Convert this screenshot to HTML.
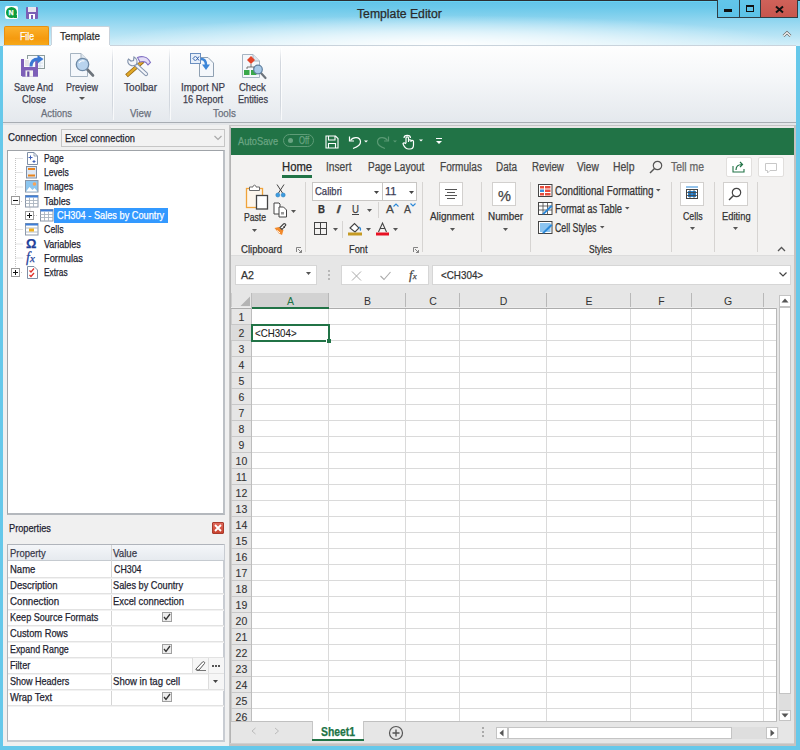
<!DOCTYPE html><html><head><meta charset="utf-8"><style>
html,body{margin:0;padding:0;width:800px;height:750px;overflow:hidden;background:#66c8ea;}
body>div,#r div{position:absolute;box-sizing:border-box;}
.t{white-space:nowrap;line-height:20px;font-family:"Liberation Sans",sans-serif;-webkit-text-stroke:0.25px currentColor;}
svg{position:absolute;overflow:visible}
</style></head><body>
<div style="left:0px;top:0px;width:800px;height:46px;background:linear-gradient(#5fc3e8 0px,#6cc9ea 8px,#9ad9f1 24px,#c4e9f7 40px,#d4eff9 46px)"></div>
<div style="left:80px;top:5px;width:700px;height:41px;background:radial-gradient(ellipse 50% 75% at 52% 100%,rgba(255,255,255,1),rgba(255,255,255,0.6) 45%,rgba(255,255,255,0) 100%)"></div>
<div style="left:0px;top:0px;width:800px;height:1px;background:#2b2e31"></div>
<div style="left:0px;top:1px;width:800px;height:1px;background:#68d3f3"></div>
<div class="t" style="left:357.00px;top:4px;font-size:12px;color:#2a2a2a;transform:scaleX(1.018);transform-origin:0 0;">Template Editor</div>
<div style="left:717px;top:0px;width:81px;height:18px;background:#2f3d44"></div>
<div style="left:718px;top:0px;width:21px;height:17px;background:linear-gradient(#62c6ea,#5cc2e7)"></div>
<div style="left:740px;top:0px;width:20px;height:17px;background:linear-gradient(#62c6ea,#5cc2e7)"></div>
<div style="left:761px;top:0px;width:36px;height:17px;background:linear-gradient(#d0625a,#c7564d)"></div>
<div style="left:724px;top:9px;width:8px;height:3px;background:#111"></div>
<div style="left:746px;top:5px;width:8px;height:7px;border:1px solid #111;border-top-width:2px"></div>
<svg style="left:775px;top:6px" width="9" height="7"><path d="M1 0.5 L8 6.5 M8 0.5 L1 6.5" stroke="#111" stroke-width="2"/></svg>
<svg style="left:782px;top:30px" width="10" height="8"><path d="M1.5 6 L5 2.5 L8.5 6" stroke="#666" stroke-width="2.6" fill="none"/><path d="M1.5 6 L5 2.5 L8.5 6" stroke="#fff" stroke-width="1.2" fill="none"/></svg>
<div style="left:5px;top:6px;width:13px;height:13px;background:#fff;border-radius:2px"></div>
<div style="left:6px;top:7px;width:11px;height:11px;background:#0d9d3f;border-radius:50%"></div>
<div class="t" style="left:8.5px;top:3px;font-size:7px;font-weight:bold;color:#fff;line-height:20px">N</div>
<div style="left:14px;top:15px;width:3px;height:3px;background:#0d9d3f"></div>
<div style="left:26px;top:7px;width:12px;height:12px;background:#7b5fb5;border-radius:1px"></div>
<div style="left:28px;top:7px;width:8px;height:5px;background:#e8e6ee"></div>
<div style="left:29px;top:14px;width:6px;height:5px;background:#fff"></div>
<div style="left:31px;top:15px;width:2px;height:4px;background:#7b5fb5"></div>
<div style="left:4px;top:26px;width:45px;height:20px;background:linear-gradient(#fbb12c,#f59a0f 60%,#f7ab1a);border:1px solid #e89010;border-bottom:none;border-radius:2px 2px 0 0"></div>
<div class="t" style="left:20.00px;top:26px;font-size:11px;color:#fff;transform:scaleX(0.789);transform-origin:0 0;">File</div>
<div style="left:51px;top:26px;width:59px;height:21px;background:#fff;border:1px solid #c9d3dc;border-bottom:none;border-radius:2px 2px 0 0"></div>
<div class="t" style="left:60.00px;top:26px;font-size:11px;color:#2d2d2d;transform:scaleX(0.894);transform-origin:0 0;">Template</div>
<div style="left:3px;top:45px;width:793px;height:78px;background:linear-gradient(#fefefe,#f4f6f8 45%,#e4e8ed);border-top:1px solid #c9d3dc"></div>
<div style="left:51px;top:45px;width:59px;height:2px;background:#fff"></div>
<div style="left:3px;top:122px;width:793px;height:1px;background:#a8adb3"></div>
<div style="left:3px;top:123px;width:793px;height:2px;background:#e4e6e9"></div>
<div style="left:112px;top:48px;width:1px;height:72px;background:linear-gradient(rgba(210,215,222,0),#d2d7de 20%,#d2d7de 80%,rgba(210,215,222,0))"></div>
<div style="left:113px;top:48px;width:1px;height:72px;background:rgba(255,255,255,0.7)"></div>
<div style="left:169px;top:48px;width:1px;height:72px;background:linear-gradient(rgba(210,215,222,0),#d2d7de 20%,#d2d7de 80%,rgba(210,215,222,0))"></div>
<div style="left:170px;top:48px;width:1px;height:72px;background:rgba(255,255,255,0.7)"></div>
<div style="left:280px;top:48px;width:1px;height:72px;background:linear-gradient(rgba(210,215,222,0),#d2d7de 20%,#d2d7de 80%,rgba(210,215,222,0))"></div>
<div style="left:281px;top:48px;width:1px;height:72px;background:rgba(255,255,255,0.7)"></div>
<div class="t" style="left:14.00px;top:77px;font-size:11px;color:#3d3d4d;transform:scaleX(0.830);transform-origin:0 0;">Save And</div>
<div class="t" style="left:22.00px;top:89px;font-size:11px;color:#3d3d4d;transform:scaleX(0.850);transform-origin:0 0;">Close</div>
<div class="t" style="left:41.00px;top:103px;font-size:11px;color:#6a707c;transform:scaleX(0.861);transform-origin:0 0;">Actions</div>
<div class="t" style="left:66.00px;top:77px;font-size:11px;color:#3d3d4d;transform:scaleX(0.815);transform-origin:0 0;">Preview</div>
<svg style="left:79px;top:97px" width="7" height="4"><path d="M0 0 H6 L3 3 Z" fill="#555"/></svg>
<div class="t" style="left:124.00px;top:77px;font-size:11px;color:#3d3d4d;transform:scaleX(0.917);transform-origin:0 0;">Toolbar</div>
<div class="t" style="left:130.00px;top:103px;font-size:11px;color:#6a707c;transform:scaleX(0.884);transform-origin:0 0;">View</div>
<div class="t" style="left:181.00px;top:77px;font-size:11px;color:#3d3d4d;transform:scaleX(0.889);transform-origin:0 0;">Import NP</div>
<div class="t" style="left:183.00px;top:89px;font-size:11px;color:#3d3d4d;transform:scaleX(0.829);transform-origin:0 0;">16 Report</div>
<div class="t" style="left:239.00px;top:77px;font-size:11px;color:#3d3d4d;transform:scaleX(0.857);transform-origin:0 0;">Check</div>
<div class="t" style="left:238.00px;top:89px;font-size:11px;color:#3d3d4d;transform:scaleX(0.833);transform-origin:0 0;">Entities</div>
<div class="t" style="left:213.00px;top:103px;font-size:11px;color:#6a707c;transform:scaleX(0.893);transform-origin:0 0;">Tools</div>
<div style="left:3px;top:125px;width:226px;height:621px;background:#f0f0f0"></div>
<div class="t" style="left:8.00px;top:127px;font-size:11px;color:#1e1e2e;transform:scaleX(0.879);transform-origin:0 0;">Connection</div>
<div style="left:61px;top:129px;width:164px;height:18px;background:#f2f2f2;border:1px solid #c6c6c6"></div>
<div class="t" style="left:65.00px;top:128px;font-size:11px;color:#1e1e2e;transform:scaleX(0.841);transform-origin:0 0;">Excel connection</div>
<svg style="left:214px;top:135px" width="8" height="6"><path d="M0.5 1 L4 4.5 L7.5 1" stroke="#aaa" stroke-width="1.2" fill="none"/></svg>
<div style="left:7px;top:150px;width:218px;height:365px;background:#fff;border:1px solid #9fa3a8;border-right:2px solid #bcc0c5;border-bottom:2px solid #b4b8bd"></div>
<div class="t" style="left:43.80px;top:148px;font-size:11px;color:#1e1e30;transform:scaleX(0.765);transform-origin:0 0;">Page</div>
<div class="t" style="left:43.80px;top:162px;font-size:11px;color:#1e1e30;transform:scaleX(0.778);transform-origin:0 0;">Levels</div>
<div class="t" style="left:43.80px;top:176px;font-size:11px;color:#1e1e30;transform:scaleX(0.811);transform-origin:0 0;">Images</div>
<div class="t" style="left:43.80px;top:191px;font-size:11px;color:#1e1e30;transform:scaleX(0.825);transform-origin:0 0;">Tables</div>
<div style="left:54px;top:208px;width:114px;height:15px;background:#3399ff"></div>
<div class="t" style="left:57.00px;top:205px;font-size:11px;color:#fff;transform:scaleX(0.838);transform-origin:0 0;">CH304 - Sales by Country</div>
<div class="t" style="left:43.80px;top:219px;font-size:11px;color:#1e1e30;transform:scaleX(0.804);transform-origin:0 0;">Cells</div>
<div class="t" style="left:43.80px;top:234px;font-size:11px;color:#1e1e30;transform:scaleX(0.816);transform-origin:0 0;">Variables</div>
<div class="t" style="left:43.80px;top:248px;font-size:11px;color:#1e1e30;transform:scaleX(0.846);transform-origin:0 0;">Formulas</div>
<div class="t" style="left:43.80px;top:262px;font-size:11px;color:#1e1e30;transform:scaleX(0.758);transform-origin:0 0;">Extras</div>
<div class="t" style="left:9.00px;top:518px;font-size:11px;color:#1e1e30;transform:scaleX(0.836);transform-origin:0 0;">Properties</div>
<div style="left:212px;top:522px;width:12px;height:12px;background:linear-gradient(#e0685a,#c9432f);border:1px solid #a83a2c;border-radius:1px"></div>
<svg style="left:214px;top:524px" width="8" height="8"><path d="M1 1 L7 7 M7 1 L1 7" stroke="#fff" stroke-width="1.8"/></svg>
<div style="left:7px;top:544px;width:218px;height:198px;background:#fff;border:1px solid #b0b4bb;border-right:2px solid #c8ccd2;border-bottom:2px solid #c8ccd2"></div>
<div style="left:8px;top:545px;width:216px;height:16px;background:linear-gradient(#f4f6f9,#e6eaef);border-bottom:1px solid #c5cad0"></div>
<div style="left:111px;top:545px;width:1px;height:160px;background:#d5d5d5"></div>
<div style="left:8px;top:577px;width:216px;height:1px;background:#e2e2e2"></div>
<div style="left:8px;top:578px;width:216px;height:1px;background:#f2f2f2"></div>
<div style="left:8px;top:593px;width:216px;height:1px;background:#e2e2e2"></div>
<div style="left:8px;top:594px;width:216px;height:1px;background:#f2f2f2"></div>
<div style="left:8px;top:609px;width:216px;height:1px;background:#e2e2e2"></div>
<div style="left:8px;top:610px;width:216px;height:1px;background:#f2f2f2"></div>
<div style="left:8px;top:625px;width:216px;height:1px;background:#e2e2e2"></div>
<div style="left:8px;top:626px;width:216px;height:1px;background:#f2f2f2"></div>
<div style="left:8px;top:641px;width:216px;height:1px;background:#e2e2e2"></div>
<div style="left:8px;top:642px;width:216px;height:1px;background:#f2f2f2"></div>
<div style="left:8px;top:657px;width:216px;height:1px;background:#e2e2e2"></div>
<div style="left:8px;top:658px;width:216px;height:1px;background:#f2f2f2"></div>
<div style="left:8px;top:673px;width:216px;height:1px;background:#e2e2e2"></div>
<div style="left:8px;top:674px;width:216px;height:1px;background:#f2f2f2"></div>
<div style="left:8px;top:689px;width:216px;height:1px;background:#e2e2e2"></div>
<div style="left:8px;top:690px;width:216px;height:1px;background:#f2f2f2"></div>
<div style="left:8px;top:705px;width:216px;height:1px;background:#e2e2e2"></div>
<div style="left:8px;top:706px;width:216px;height:1px;background:#f2f2f2"></div>
<div class="t" style="left:10.40px;top:543px;font-size:11px;color:#3a3a4a;transform:scaleX(0.858);transform-origin:0 0;">Property</div>
<div class="t" style="left:113.00px;top:543px;font-size:11px;color:#3a3a4a;transform:scaleX(0.881);transform-origin:0 0;">Value</div>
<div class="t" style="left:9.75px;top:559px;font-size:11px;color:#1e1e30;transform:scaleX(0.863);transform-origin:0 0;">Name</div>
<div class="t" style="left:9.75px;top:575px;font-size:11px;color:#1e1e30;transform:scaleX(0.866);transform-origin:0 0;">Description</div>
<div class="t" style="left:9.75px;top:591px;font-size:11px;color:#1e1e30;transform:scaleX(0.883);transform-origin:0 0;">Connection</div>
<div class="t" style="left:9.75px;top:607px;font-size:11px;color:#1e1e30;transform:scaleX(0.825);transform-origin:0 0;">Keep Source Formats</div>
<div class="t" style="left:9.75px;top:623px;font-size:11px;color:#1e1e30;transform:scaleX(0.847);transform-origin:0 0;">Custom Rows</div>
<div class="t" style="left:9.75px;top:639px;font-size:11px;color:#1e1e30;transform:scaleX(0.808);transform-origin:0 0;">Expand Range</div>
<div class="t" style="left:9.75px;top:655px;font-size:11px;color:#1e1e30;transform:scaleX(0.827);transform-origin:0 0;">Filter</div>
<div class="t" style="left:9.75px;top:671px;font-size:11px;color:#1e1e30;transform:scaleX(0.820);transform-origin:0 0;">Show Headers</div>
<div class="t" style="left:9.75px;top:687px;font-size:11px;color:#1e1e30;transform:scaleX(0.856);transform-origin:0 0;">Wrap Text</div>
<div class="t" style="left:113.50px;top:559px;font-size:11px;color:#1e1e30;transform:scaleX(0.803);transform-origin:0 0;">CH304</div>
<div class="t" style="left:113.00px;top:575px;font-size:11px;color:#1e1e30;transform:scaleX(0.836);transform-origin:0 0;">Sales by Country</div>
<div class="t" style="left:113.00px;top:591px;font-size:11px;color:#1e1e30;transform:scaleX(0.853);transform-origin:0 0;">Excel connection</div>
<div class="t" style="left:113.00px;top:671px;font-size:11px;color:#1e1e30;transform:scaleX(0.870);transform-origin:0 0;">Show in tag cell</div>
<div style="left:229px;top:125px;width:567px;height:621px;background:#e6e6e6;border:1px solid #c4c4c4;border-right:2px solid #c6c2c0;border-bottom:2px solid #c6c2c0"></div>
<div style="left:230px;top:126px;width:564px;height:618px;border:1px solid #ebe6e6;border-left:1px solid #b4b4b4"></div>
<div style="left:231px;top:128px;width:563px;height:27px;background:#217346"></div>
<div style="left:231px;top:155px;width:563px;height:100px;background:#f3f2f1"></div>
<div style="left:231px;top:255px;width:563px;height:1px;background:#dcdcdc"></div>
<div style="left:231px;top:256px;width:563px;height:37px;background:#e6e6e6"></div>
<div class="t" style="left:238.00px;top:131px;font-size:10.5px;color:#6aa583;transform:scaleX(0.879);transform-origin:0 0;">AutoSave</div>
<div style="left:283px;top:134px;width:31px;height:13px;border:1px solid #5e9c77;border-radius:6.5px"></div>
<div style="left:288px;top:138px;width:5px;height:5px;background:#6aa583;border-radius:50%"></div>
<div class="t" style="left:298.70px;top:131px;font-size:10px;color:#6aa583;transform:scaleX(0.763);transform-origin:0 0;">Off</div>
<svg style="left:325px;top:135px" width="14" height="14"><path d="M1 1 H10.5 L13 3.5 V13 H1 Z" fill="none" stroke="#fff" stroke-width="1.1"/><path d="M3.5 1 V5 H10 V1" fill="none" stroke="#fff" stroke-width="1.1"/><path d="M3.5 13 V8.5 H10.5 V13" fill="none" stroke="#fff" stroke-width="1.1"/></svg>
<svg style="left:348px;top:135px" width="22" height="14"><path d="M2.5 5.5 C5 1.5 12 1.5 12.5 6.5 C12.8 9.5 9 12 5 13.5" fill="none" stroke="#fff" stroke-width="1.2"/><path d="M1.5 1.5 V6 H6" fill="none" stroke="#fff" stroke-width="1.2"/><path d="M16 5.5 H20 L18 7.5 Z" fill="#fff"/></svg>
<svg style="left:376px;top:135px" width="22" height="14"><path d="M11.5 5.5 C9 1.5 2 1.5 1.5 6.5 C1.2 9.5 5 12 9 13.5" fill="none" stroke="#5a9a74" stroke-width="1.2"/><path d="M12.5 1.5 V6 H8" fill="none" stroke="#5a9a74" stroke-width="1.2"/><path d="M17 5.5 H21 L19 7.5 Z" fill="#5a9a74"/></svg>
<svg style="left:402px;top:134px" width="24" height="16"><path d="M4 9 V4 C4 2.5 6.5 2.5 6.5 4 V8 M6.5 6.5 C6.5 5.5 9 5.5 9 6.5 V8 M9 7 C9 6 11.5 6 11.5 7.5 V11 C11.5 13.5 10 15 8 15 H6.5 C4.5 15 2.5 13 1.5 11 L1 9.5 C1.5 8.5 3 8.5 4 10" fill="none" stroke="#fff" stroke-width="1.2"/><path d="M2 4 C2 0.5 8.5 0.5 8.5 4" fill="none" stroke="#fff" stroke-width="1.1"/><path d="M17 5.5 H21 L19 7.5 Z" fill="#fff"/></svg>
<svg style="left:435px;top:137px" width="8" height="8"><path d="M1 1.5 H7" stroke="#fff" stroke-width="1"/><path d="M1 4 H7 L4 7 Z" fill="#fff"/></svg>
<div class="t" style="left:282.00px;top:157px;font-size:12px;color:#262626;transform:scaleX(0.938);transform-origin:0 0;">Home</div>
<div style="left:282px;top:175px;width:30px;height:3px;background:#217346"></div>
<div class="t" style="left:326.00px;top:157px;font-size:12px;color:#474747;transform:scaleX(0.850);transform-origin:0 0;">Insert</div>
<div class="t" style="left:367.50px;top:157px;font-size:12px;color:#474747;transform:scaleX(0.837);transform-origin:0 0;">Page Layout</div>
<div class="t" style="left:439.50px;top:157px;font-size:12px;color:#474747;transform:scaleX(0.840);transform-origin:0 0;">Formulas</div>
<div class="t" style="left:496.00px;top:157px;font-size:12px;color:#474747;transform:scaleX(0.824);transform-origin:0 0;">Data</div>
<div class="t" style="left:532.00px;top:157px;font-size:12px;color:#474747;transform:scaleX(0.810);transform-origin:0 0;">Review</div>
<div class="t" style="left:577.00px;top:157px;font-size:12px;color:#474747;transform:scaleX(0.846);transform-origin:0 0;">View</div>
<div class="t" style="left:612.50px;top:157px;font-size:12px;color:#474747;transform:scaleX(0.869);transform-origin:0 0;">Help</div>
<svg style="left:649px;top:160px" width="14" height="14"><circle cx="8.5" cy="5.5" r="4.2" fill="none" stroke="#555" stroke-width="1.2"/><path d="M5.5 8.5 L1 13" stroke="#555" stroke-width="1.4"/></svg>
<div class="t" style="left:671.00px;top:157px;font-size:12px;color:#666;transform:scaleX(0.868);transform-origin:0 0;">Tell me</div>
<div style="left:726px;top:157px;width:26px;height:20px;background:#fff;border:1px solid #e1dfdd;border-radius:2px"></div>
<svg style="left:732px;top:161px" width="14" height="12"><path d="M1 5 V11 H12 V8" fill="none" stroke="#217346" stroke-width="1.1"/><path d="M4 9 C4 5 7 3.5 10 3.5 M8 1 L10.5 3.5 L8 6" fill="none" stroke="#217346" stroke-width="1.2"/></svg>
<div style="left:758px;top:157px;width:26px;height:20px;background:#fff;border:1px solid #e1dfdd;border-radius:2px"></div>
<svg style="left:764px;top:162px" width="14" height="12"><path d="M1.5 1.5 H12.5 V8.5 H6 L3.5 11 V8.5 H1.5 Z" fill="none" stroke="#c8c8c8" stroke-width="1"/></svg>
<svg style="left:245px;top:184px" width="24" height="26"><rect x="1.5" y="4.5" width="16" height="19" fill="#fdf6ec" stroke="#f0a33a" stroke-width="1.3"/><path d="M4.5 6.5 V3 H8 C8 0.5 11 0.5 11 3 H14.5 V6.5 Z" fill="#fff" stroke="#6b6b6b" stroke-width="1"/><rect x="11.5" y="11.5" width="11" height="13.5" fill="#fff" stroke="#444" stroke-width="1.3"/></svg>
<div class="t" style="left:244.00px;top:207px;font-size:10.5px;color:#333;transform:scaleX(0.822);transform-origin:0 0;">Paste</div>
<svg style="left:252px;top:229px" width="6" height="4"><path d="M0 0 H5 L2.5 3 Z" fill="#555"/></svg>
<svg style="left:275px;top:184px" width="11" height="14"><path d="M2 0.5 L7.5 9 M9 0.5 L3.5 9" stroke="#444" stroke-width="1"/><circle cx="2.8" cy="11" r="2" fill="#3c9ce0" stroke="#2b7fc0" stroke-width="0.6"/><circle cx="8.2" cy="11" r="2" fill="#3c9ce0" stroke="#2b7fc0" stroke-width="0.6"/></svg>
<svg style="left:273px;top:202px" width="15" height="16"><path d="M1 1 H6 L7 2 V12 H1 Z" fill="#fff" stroke="#444" stroke-width="1"/><path d="M6 5 H10.5 L13.5 8 V15 H6 Z" fill="#fff" stroke="#444" stroke-width="1"/><rect x="8" y="10" width="3" height="2.5" fill="#999"/></svg>
<svg style="left:291px;top:210px" width="6" height="4"><path d="M0 0 H5 L2.5 3 Z" fill="#555"/></svg>
<svg style="left:274px;top:222px" width="14" height="14"><path d="M0.5 6 L5 11.5 L8 13 L9.5 8 L5 5 Z" fill="#f28a2c"/><path d="M3 8.5 L6 11" stroke="#fff" stroke-width="1"/><path d="M6 5.5 L9.5 2 C10.5 1 12.5 2.5 11.5 3.5 L8 7.5 Z" fill="#fff" stroke="#444" stroke-width="1.1"/><path d="M9.5 4.5 L11 6" stroke="#444" stroke-width="1"/></svg>
<div class="t" style="left:241.00px;top:240px;font-size:10px;color:#333;transform:scaleX(0.959);transform-origin:0 0;">Clipboard</div>
<svg style="left:296px;top:247px" width="6" height="6"><path d="M0.5 0.5 H5 M0.5 0.5 V5 M2 2 L5.5 5.5 M5.5 3 V5.5 H3" stroke="#777" stroke-width="0.9" fill="none"/></svg>
<div style="left:305px;top:182px;width:1px;height:70px;background:#d6d4d2"></div>
<div style="left:312px;top:182px;width:71px;height:19px;background:#fff;border:1px solid #c8c6c4"></div>
<div style="left:382px;top:182px;width:35px;height:19px;background:#fff;border:1px solid #c8c6c4"></div>
<div class="t" style="left:315.00px;top:181px;font-size:11px;color:#3b3b55;transform:scaleX(0.864);transform-origin:0 0;">Calibri</div>
<div class="t" style="left:385.00px;top:181px;font-size:11px;color:#3b3b55;">11</div>
<svg style="left:374px;top:191px" width="6" height="4"><path d="M0 0 H5 L2.5 3 Z" fill="#444"/></svg>
<svg style="left:409px;top:191px" width="6" height="4"><path d="M0 0 H5 L2.5 3 Z" fill="#444"/></svg>
<div class="t" style="left:318.00px;top:199px;font-size:11px;color:#333;font-weight:bold;transform:scaleX(0.875);transform-origin:0 0;">B</div>
<div class="t" style="left:336.00px;top:199px;font-size:11px;color:#444;font-style:italic;transform:scaleX(1.667);transform-origin:0 0;">I</div>
<div class="t" style="left:352.00px;top:199px;font-size:11px;color:#444;transform:scaleX(0.875);transform-origin:0 0;">U</div>
<div style="left:352px;top:214px;width:7px;height:1px;background:#444"></div>
<svg style="left:367px;top:209px" width="6" height="4"><path d="M0 0 H5 L2.5 3 Z" fill="#555"/></svg>
<div style="left:378px;top:202px;width:1px;height:16px;background:#d6d4d2"></div>
<div class="t" style="left:386.00px;top:199px;font-size:11px;color:#444;transform:scaleX(1.067);transform-origin:0 0;">A</div>
<svg style="left:393px;top:203px" width="6" height="4"><path d="M0.5 3.5 L3 1 L5.5 3.5" stroke="#2b88d8" stroke-width="1.1" fill="none"/></svg>
<div class="t" style="left:404.00px;top:200px;font-size:10px;color:#444;transform:scaleX(1.037);transform-origin:0 0;">A</div>
<svg style="left:410px;top:203px" width="6" height="4"><path d="M0.5 0.5 L3 3 L5.5 0.5" stroke="#2b88d8" stroke-width="1.1" fill="none"/></svg>
<svg style="left:314px;top:222px" width="14" height="14"><rect x="0.5" y="0.5" width="12" height="12" fill="none" stroke="#444" stroke-width="1"/><path d="M6.5 0.5 V12.5 M0.5 6.5 H12.5" stroke="#444" stroke-width="1"/></svg>
<svg style="left:333px;top:228px" width="6" height="4"><path d="M0 0 H5 L2.5 3 Z" fill="#555"/></svg>
<div style="left:342px;top:221px;width:1px;height:17px;background:#d6d4d2"></div>
<svg style="left:348px;top:222px" width="15" height="14"><path d="M2 6 L6.5 1.5 L11 6 L7 10 Z" fill="#fff" stroke="#444" stroke-width="1.1"/><path d="M11 5 C12.5 5.5 13 7.5 12 8.5" fill="none" stroke="#2b88d8" stroke-width="1.3"/><rect x="0" y="10.5" width="14" height="3" fill="#c59a22"/></svg>
<svg style="left:366px;top:228px" width="6" height="4"><path d="M0 0 H5 L2.5 3 Z" fill="#555"/></svg>
<svg style="left:376px;top:222px" width="14" height="14"><path d="M2.5 10 L6.5 1 L10.5 10 M4 6.5 H9" fill="none" stroke="#444" stroke-width="1.1"/><rect x="0" y="10.5" width="13" height="3" fill="#e81123"/></svg>
<svg style="left:393px;top:228px" width="6" height="4"><path d="M0 0 H5 L2.5 3 Z" fill="#555"/></svg>
<div class="t" style="left:348.50px;top:240px;font-size:10px;color:#333;transform:scaleX(0.925);transform-origin:0 0;">Font</div>
<svg style="left:413px;top:247px" width="6" height="6"><path d="M0.5 0.5 H5 M0.5 0.5 V5 M2 2 L5.5 5.5 M5.5 3 V5.5 H3" stroke="#777" stroke-width="0.9" fill="none"/></svg>
<div style="left:422px;top:182px;width:1px;height:70px;background:#d6d4d2"></div>
<div style="left:439px;top:182px;width:24px;height:24px;background:#fff;border:1px solid #d2d0ce"></div>
<svg style="left:444px;top:187px" width="14" height="14"><path d="M1 2.5 H13 M3 5.5 H11 M1 8.5 H13 M3 11.5 H11" stroke="#555" stroke-width="1"/></svg>
<div class="t" style="left:430.00px;top:206px;font-size:10.5px;color:#333;transform:scaleX(0.941);transform-origin:0 0;">Alignment</div>
<svg style="left:450px;top:228px" width="6" height="4"><path d="M0 0 H5 L2.5 3 Z" fill="#555"/></svg>
<div style="left:481px;top:182px;width:1px;height:70px;background:#d6d4d2"></div>
<div style="left:492px;top:182px;width:24px;height:24px;background:#fff;border:1px solid #d2d0ce"></div>
<div class="t" style="left:498.00px;top:186px;font-size:14px;color:#444;transform:scaleX(1.040);transform-origin:0 0;">%</div>
<div class="t" style="left:488.00px;top:206px;font-size:10.5px;color:#333;transform:scaleX(0.940);transform-origin:0 0;">Number</div>
<svg style="left:503px;top:228px" width="6" height="4"><path d="M0 0 H5 L2.5 3 Z" fill="#555"/></svg>
<div style="left:530px;top:182px;width:1px;height:70px;background:#d6d4d2"></div>
<svg style="left:538px;top:184px" width="15" height="13"><rect x="0.5" y="0.5" width="13.5" height="12" fill="#fff" stroke="#444" stroke-width="1"/><rect x="2" y="2" width="4" height="2.5" fill="#e74c3c"/><rect x="7" y="2" width="5.5" height="2.5" fill="#e74c3c"/><rect x="2" y="5.5" width="4" height="2.5" fill="#3b8ed8"/><rect x="7" y="5.5" width="5.5" height="2.5" fill="#e74c3c"/><rect x="2" y="9" width="4" height="2.5" fill="#e74c3c"/><rect x="7" y="9" width="5.5" height="2.5" fill="#e74c3c"/></svg>
<div class="t" style="left:554.50px;top:181px;font-size:12px;color:#333;transform:scaleX(0.816);transform-origin:0 0;">Conditional Formatting</div>
<svg style="left:656px;top:189px" width="5" height="3"><path d="M0 0 H4.5 L2.25 2.5 Z" fill="#555"/></svg>
<svg style="left:538px;top:202px" width="15" height="13"><rect x="0.5" y="0.5" width="13.5" height="12" fill="#fff" stroke="#444" stroke-width="1"/><path d="M0.5 4 H14 M0.5 8 H14 M5 0.5 V12.5 M9.5 0.5 V12.5" stroke="#444" stroke-width="0.8"/><path d="M4 12 L13 3 L14.5 4.5 L6 12.5 Z" fill="#2b88d8"/></svg>
<div class="t" style="left:554.50px;top:199px;font-size:12px;color:#333;transform:scaleX(0.781);transform-origin:0 0;">Format as Table</div>
<svg style="left:625px;top:207px" width="5" height="3"><path d="M0 0 H4.5 L2.25 2.5 Z" fill="#555"/></svg>
<svg style="left:538px;top:221px" width="15" height="13"><rect x="0.5" y="0.5" width="13.5" height="12" fill="#fff" stroke="#444" stroke-width="1"/><rect x="2" y="2" width="10.5" height="9" fill="#8cc4f0"/><path d="M4 12 L13 3 L14.5 4.5 L6 12.5 Z" fill="#2b88d8"/></svg>
<div class="t" style="left:554.50px;top:218px;font-size:12px;color:#333;transform:scaleX(0.731);transform-origin:0 0;">Cell Styles</div>
<svg style="left:600px;top:226px" width="5" height="3"><path d="M0 0 H4.5 L2.25 2.5 Z" fill="#555"/></svg>
<div class="t" style="left:588.50px;top:240px;font-size:10px;color:#333;transform:scaleX(0.844);transform-origin:0 0;">Styles</div>
<div style="left:671px;top:182px;width:1px;height:70px;background:#d6d4d2"></div>
<div style="left:680px;top:182px;width:24px;height:24px;background:#fff;border:1px solid #d2d0ce"></div>
<svg style="left:685px;top:186px" width="14" height="15"><rect x="1.5" y="3.5" width="11" height="9" fill="#fff" stroke="#444" stroke-width="1"/><rect x="3" y="5" width="8" height="6" fill="#2b88d8"/><path d="M1.5 6.5 H12.5 M1.5 9.5 H12.5 M5 3.5 V12.5 M9 3.5 V12.5" stroke="#444" stroke-width="0.8"/><path d="M1 1 H13" stroke="#2b88d8" stroke-width="1"/></svg>
<div class="t" style="left:683.00px;top:206px;font-size:10.5px;color:#333;transform:scaleX(0.839);transform-origin:0 0;">Cells</div>
<svg style="left:690px;top:227px" width="6" height="4"><path d="M0 0 H5 L2.5 3 Z" fill="#555"/></svg>
<div style="left:714px;top:182px;width:1px;height:70px;background:#d6d4d2"></div>
<div style="left:723px;top:182px;width:25px;height:24px;background:#fff;border:1px solid #d2d0ce"></div>
<svg style="left:728px;top:187px" width="14" height="14"><circle cx="8.5" cy="5.5" r="4.2" fill="none" stroke="#444" stroke-width="1.2"/><path d="M5.5 8.5 L1 13" stroke="#444" stroke-width="1.4"/></svg>
<div class="t" style="left:721.50px;top:206px;font-size:10.5px;color:#333;transform:scaleX(0.891);transform-origin:0 0;">Editing</div>
<svg style="left:733px;top:227px" width="6" height="4"><path d="M0 0 H5 L2.5 3 Z" fill="#555"/></svg>
<div style="left:757px;top:182px;width:1px;height:70px;background:#d6d4d2"></div>
<svg style="left:777px;top:246px" width="9" height="6"><path d="M1 5 L4.5 1.5 L8 5" stroke="#555" stroke-width="1.3" fill="none"/></svg>
<div style="left:235px;top:265px;width:82px;height:20px;background:#fff;border:1px solid #d6d6d6"></div>
<div class="t" style="left:241.00px;top:265px;font-size:11px;color:#333;transform:scaleX(0.963);transform-origin:0 0;">A2</div>
<svg style="left:306px;top:272px" width="6" height="4"><path d="M0 0 H5 L2.5 3 Z" fill="#555"/></svg>
<div style="left:328px;top:270px;width:2px;height:2px;background:#b8b8b8"></div>
<div style="left:328px;top:274px;width:2px;height:2px;background:#b8b8b8"></div>
<div style="left:328px;top:278px;width:2px;height:2px;background:#b8b8b8"></div>
<div style="left:341px;top:265px;width:88px;height:20px;background:#fff;border:1px solid #d6d6d6"></div>
<svg style="left:351px;top:271px" width="11" height="10"><path d="M1 0.5 L10 9.5 M10 0.5 L1 9.5" stroke="#aaa" stroke-width="1"/></svg>
<svg style="left:380px;top:271px" width="11" height="10"><path d="M0.5 5 L4 8.5 L10.5 1" stroke="#aaa" stroke-width="1.1" fill="none"/></svg>
<div class="t" style="left:409px;top:265px;font-family:'Liberation Serif';font-size:13px;font-style:italic;color:#444;line-height:20px">f<span style="font-size:9px">x</span></div>
<div style="left:432px;top:265px;width:359px;height:20px;background:#fff;border:1px solid #d6d6d6"></div>
<div class="t" style="left:441.00px;top:265px;font-size:11px;color:#333;transform:scaleX(0.894);transform-origin:0 0;">&lt;CH304&gt;</div>
<svg style="left:779px;top:272px" width="8" height="5"><path d="M0.5 0.5 L4 4 L7.5 0.5" stroke="#444" stroke-width="1.2" fill="none"/></svg>
<div style="left:231px;top:293px;width:545px;height:428px;background:#fff"></div>
<div style="left:231px;top:293px;width:545px;height:16px;background:#e6e6e6"></div>
<div style="left:231px;top:293px;width:21px;height:428px;background:#e6e6e6"></div>
<div style="left:231px;top:293px;width:1px;height:451px;background:#cdcdcd"></div>
<svg style="left:240px;top:296px" width="11" height="11"><path d="M10 0.5 V10 H0.5 Z" fill="#b4b4b4"/></svg>
<div style="left:252px;top:293px;width:77px;height:15px;background:#d2d2d2"></div>
<div style="left:251px;top:293px;width:1px;height:15px;background:#b8b8b8"></div>
<div style="left:328px;top:293px;width:1px;height:15px;background:#b8b8b8"></div>
<div style="left:328px;top:308px;width:1px;height:413px;background:#dadada"></div>
<div style="left:405px;top:293px;width:1px;height:15px;background:#b8b8b8"></div>
<div style="left:405px;top:308px;width:1px;height:413px;background:#dadada"></div>
<div style="left:459px;top:293px;width:1px;height:15px;background:#b8b8b8"></div>
<div style="left:459px;top:308px;width:1px;height:413px;background:#dadada"></div>
<div style="left:546px;top:293px;width:1px;height:15px;background:#b8b8b8"></div>
<div style="left:546px;top:308px;width:1px;height:413px;background:#dadada"></div>
<div style="left:630px;top:293px;width:1px;height:15px;background:#b8b8b8"></div>
<div style="left:630px;top:308px;width:1px;height:413px;background:#dadada"></div>
<div style="left:691px;top:293px;width:1px;height:15px;background:#b8b8b8"></div>
<div style="left:691px;top:308px;width:1px;height:413px;background:#dadada"></div>
<div style="left:763px;top:293px;width:1px;height:15px;background:#b8b8b8"></div>
<div style="left:763px;top:308px;width:1px;height:413px;background:#dadada"></div>
<div style="left:231px;top:308px;width:545px;height:1px;background:#acacac"></div>
<div style="left:231px;top:307px;width:545px;height:1px;background:#ececec"></div>
<div style="left:252px;top:307px;width:77px;height:2px;background:#217346"></div>
<div style="left:251px;top:293px;width:1px;height:428px;background:#bdbdbd"></div>
<div class="t" style="left:287.00px;top:291px;font-size:10.5px;color:#217346;-webkit-text-stroke:0;">A</div>
<div class="t" style="left:364.00px;top:291px;font-size:10.5px;color:#333;-webkit-text-stroke:0;">B</div>
<div class="t" style="left:429.25px;top:291px;font-size:10.5px;color:#333;-webkit-text-stroke:0;">C</div>
<div class="t" style="left:499.75px;top:291px;font-size:10.5px;color:#333;-webkit-text-stroke:0;">D</div>
<div class="t" style="left:585.50px;top:291px;font-size:10.5px;color:#333;-webkit-text-stroke:0;">E</div>
<div class="t" style="left:658.25px;top:291px;font-size:10.5px;color:#333;-webkit-text-stroke:0;">F</div>
<div class="t" style="left:723.88px;top:291px;font-size:10.5px;color:#333;-webkit-text-stroke:0;">G</div>
<div style="left:231px;top:325px;width:20px;height:16px;background:#dcdcdc"></div>
<div style="left:252px;top:324px;width:524px;height:1px;background:#dadada"></div>
<div style="left:231px;top:324px;width:20px;height:1px;background:#c8c8c8"></div>
<div class="t" style="left:238.62px;top:307px;font-size:10.5px;color:#333;-webkit-text-stroke:0.1px currentColor;">1</div>
<div style="left:252px;top:340px;width:524px;height:1px;background:#dadada"></div>
<div style="left:231px;top:340px;width:20px;height:1px;background:#c8c8c8"></div>
<div class="t" style="left:238.62px;top:323px;font-size:10.5px;color:#333;-webkit-text-stroke:0.1px currentColor;">2</div>
<div style="left:252px;top:356px;width:524px;height:1px;background:#dadada"></div>
<div style="left:231px;top:356px;width:20px;height:1px;background:#c8c8c8"></div>
<div class="t" style="left:238.62px;top:339px;font-size:10.5px;color:#333;-webkit-text-stroke:0.1px currentColor;">3</div>
<div style="left:252px;top:372px;width:524px;height:1px;background:#dadada"></div>
<div style="left:231px;top:372px;width:20px;height:1px;background:#c8c8c8"></div>
<div class="t" style="left:238.62px;top:355px;font-size:10.5px;color:#333;-webkit-text-stroke:0.1px currentColor;">4</div>
<div style="left:252px;top:388px;width:524px;height:1px;background:#dadada"></div>
<div style="left:231px;top:388px;width:20px;height:1px;background:#c8c8c8"></div>
<div class="t" style="left:238.62px;top:371px;font-size:10.5px;color:#333;-webkit-text-stroke:0.1px currentColor;">5</div>
<div style="left:252px;top:404px;width:524px;height:1px;background:#dadada"></div>
<div style="left:231px;top:404px;width:20px;height:1px;background:#c8c8c8"></div>
<div class="t" style="left:238.62px;top:387px;font-size:10.5px;color:#333;-webkit-text-stroke:0.1px currentColor;">6</div>
<div style="left:252px;top:420px;width:524px;height:1px;background:#dadada"></div>
<div style="left:231px;top:420px;width:20px;height:1px;background:#c8c8c8"></div>
<div class="t" style="left:238.62px;top:403px;font-size:10.5px;color:#333;-webkit-text-stroke:0.1px currentColor;">7</div>
<div style="left:252px;top:436px;width:524px;height:1px;background:#dadada"></div>
<div style="left:231px;top:436px;width:20px;height:1px;background:#c8c8c8"></div>
<div class="t" style="left:238.62px;top:419px;font-size:10.5px;color:#333;-webkit-text-stroke:0.1px currentColor;">8</div>
<div style="left:252px;top:452px;width:524px;height:1px;background:#dadada"></div>
<div style="left:231px;top:452px;width:20px;height:1px;background:#c8c8c8"></div>
<div class="t" style="left:238.62px;top:435px;font-size:10.5px;color:#333;-webkit-text-stroke:0.1px currentColor;">9</div>
<div style="left:252px;top:468px;width:524px;height:1px;background:#dadada"></div>
<div style="left:231px;top:468px;width:20px;height:1px;background:#c8c8c8"></div>
<div class="t" style="left:235.62px;top:451px;font-size:10.5px;color:#333;-webkit-text-stroke:0.1px currentColor;">10</div>
<div style="left:252px;top:484px;width:524px;height:1px;background:#dadada"></div>
<div style="left:231px;top:484px;width:20px;height:1px;background:#c8c8c8"></div>
<div class="t" style="left:236.00px;top:467px;font-size:10.5px;color:#333;-webkit-text-stroke:0.1px currentColor;">11</div>
<div style="left:252px;top:500px;width:524px;height:1px;background:#dadada"></div>
<div style="left:231px;top:500px;width:20px;height:1px;background:#c8c8c8"></div>
<div class="t" style="left:235.62px;top:483px;font-size:10.5px;color:#333;-webkit-text-stroke:0.1px currentColor;">12</div>
<div style="left:252px;top:516px;width:524px;height:1px;background:#dadada"></div>
<div style="left:231px;top:516px;width:20px;height:1px;background:#c8c8c8"></div>
<div class="t" style="left:235.62px;top:499px;font-size:10.5px;color:#333;-webkit-text-stroke:0.1px currentColor;">13</div>
<div style="left:252px;top:532px;width:524px;height:1px;background:#dadada"></div>
<div style="left:231px;top:532px;width:20px;height:1px;background:#c8c8c8"></div>
<div class="t" style="left:235.62px;top:515px;font-size:10.5px;color:#333;-webkit-text-stroke:0.1px currentColor;">14</div>
<div style="left:252px;top:548px;width:524px;height:1px;background:#dadada"></div>
<div style="left:231px;top:548px;width:20px;height:1px;background:#c8c8c8"></div>
<div class="t" style="left:235.62px;top:531px;font-size:10.5px;color:#333;-webkit-text-stroke:0.1px currentColor;">15</div>
<div style="left:252px;top:564px;width:524px;height:1px;background:#dadada"></div>
<div style="left:231px;top:564px;width:20px;height:1px;background:#c8c8c8"></div>
<div class="t" style="left:235.62px;top:547px;font-size:10.5px;color:#333;-webkit-text-stroke:0.1px currentColor;">16</div>
<div style="left:252px;top:580px;width:524px;height:1px;background:#dadada"></div>
<div style="left:231px;top:580px;width:20px;height:1px;background:#c8c8c8"></div>
<div class="t" style="left:235.62px;top:563px;font-size:10.5px;color:#333;-webkit-text-stroke:0.1px currentColor;">17</div>
<div style="left:252px;top:596px;width:524px;height:1px;background:#dadada"></div>
<div style="left:231px;top:596px;width:20px;height:1px;background:#c8c8c8"></div>
<div class="t" style="left:235.62px;top:579px;font-size:10.5px;color:#333;-webkit-text-stroke:0.1px currentColor;">18</div>
<div style="left:252px;top:612px;width:524px;height:1px;background:#dadada"></div>
<div style="left:231px;top:612px;width:20px;height:1px;background:#c8c8c8"></div>
<div class="t" style="left:235.62px;top:595px;font-size:10.5px;color:#333;-webkit-text-stroke:0.1px currentColor;">19</div>
<div style="left:252px;top:628px;width:524px;height:1px;background:#dadada"></div>
<div style="left:231px;top:628px;width:20px;height:1px;background:#c8c8c8"></div>
<div class="t" style="left:235.62px;top:611px;font-size:10.5px;color:#333;-webkit-text-stroke:0.1px currentColor;">20</div>
<div style="left:252px;top:644px;width:524px;height:1px;background:#dadada"></div>
<div style="left:231px;top:644px;width:20px;height:1px;background:#c8c8c8"></div>
<div class="t" style="left:235.62px;top:627px;font-size:10.5px;color:#333;-webkit-text-stroke:0.1px currentColor;">21</div>
<div style="left:252px;top:660px;width:524px;height:1px;background:#dadada"></div>
<div style="left:231px;top:660px;width:20px;height:1px;background:#c8c8c8"></div>
<div class="t" style="left:235.62px;top:643px;font-size:10.5px;color:#333;-webkit-text-stroke:0.1px currentColor;">22</div>
<div style="left:252px;top:676px;width:524px;height:1px;background:#dadada"></div>
<div style="left:231px;top:676px;width:20px;height:1px;background:#c8c8c8"></div>
<div class="t" style="left:235.62px;top:659px;font-size:10.5px;color:#333;-webkit-text-stroke:0.1px currentColor;">23</div>
<div style="left:252px;top:692px;width:524px;height:1px;background:#dadada"></div>
<div style="left:231px;top:692px;width:20px;height:1px;background:#c8c8c8"></div>
<div class="t" style="left:235.62px;top:675px;font-size:10.5px;color:#333;-webkit-text-stroke:0.1px currentColor;">24</div>
<div style="left:252px;top:708px;width:524px;height:1px;background:#dadada"></div>
<div style="left:231px;top:708px;width:20px;height:1px;background:#c8c8c8"></div>
<div class="t" style="left:235.62px;top:691px;font-size:10.5px;color:#333;-webkit-text-stroke:0.1px currentColor;">25</div>
<div class="t" style="left:235.62px;top:707px;font-size:10.5px;color:#333;-webkit-text-stroke:0.1px currentColor;">26</div>
<div style="left:231px;top:721px;width:546px;height:1px;background:#c0c0c0"></div>
<div style="left:776px;top:308px;width:1px;height:413px;background:#b8b8b8"></div>
<div style="left:251px;top:324px;width:79px;height:18px;border:2px solid #217346"></div>
<div style="left:326px;top:339px;width:1px;height:3px;background:#fff"></div>
<div style="left:327px;top:339px;width:4px;height:4px;background:#217346"></div>
<div class="t" style="left:254.50px;top:323px;font-size:11px;color:#222;transform:scaleX(0.883);transform-origin:0 0;-webkit-text-stroke:0.1px currentColor;">&lt;CH304&gt;</div>
<div style="left:777px;top:293px;width:17px;height:428px;background:#e6e6e6"></div>
<div style="left:779px;top:295px;width:12px;height:426px;background:#dedede"></div>
<div style="left:779px;top:295px;width:12px;height:12px;background:#fff;border:1px solid #c4c4c4"></div>
<svg style="left:781px;top:298px" width="8" height="5"><path d="M0.5 4.5 H7.5 L4 0.5 Z" fill="#555"/></svg>
<div style="left:779px;top:307px;width:12px;height:387px;background:#fff;border:1px solid #c4c4c4"></div>
<div style="left:779px;top:710px;width:12px;height:11px;background:#fff;border:1px solid #c4c4c4"></div>
<svg style="left:781px;top:713px" width="8" height="5"><path d="M0.5 0.5 H7.5 L4 4.5 Z" fill="#555"/></svg>
<div style="left:231px;top:722px;width:563px;height:22px;background:#e6e6e6"></div>
<div style="left:312px;top:721px;width:52px;height:20px;background:#fff;border-left:1px solid #c6c6c6;border-right:1px solid #c6c6c6"></div>
<div style="left:312px;top:739px;width:52px;height:2px;background:#217346"></div>
<div class="t" style="left:321.00px;top:722px;font-size:12px;color:#217346;font-weight:bold;transform:scaleX(0.866);transform-origin:0 0;">Sheet1</div>
<svg style="left:251px;top:727px" width="6" height="8"><path d="M4.5 1 L1 4 L4.5 7" stroke="#bbb" stroke-width="1" fill="none"/></svg>
<svg style="left:274px;top:727px" width="6" height="8"><path d="M1 1 L4.5 4 L1 7" stroke="#bbb" stroke-width="1" fill="none"/></svg>
<svg style="left:388px;top:725px" width="16" height="16"><circle cx="8" cy="8" r="6.5" fill="none" stroke="#555" stroke-width="1.2"/><path d="M8 4.5 V11.5 M4.5 8 H11.5" stroke="#555" stroke-width="1.4"/></svg>
<div style="left:482px;top:727px;width:2px;height:2px;background:#aaa"></div>
<div style="left:482px;top:731px;width:2px;height:2px;background:#aaa"></div>
<div style="left:482px;top:735px;width:2px;height:2px;background:#aaa"></div>
<div style="left:496px;top:727px;width:283px;height:12px;background:#dedede"></div>
<div style="left:496px;top:727px;width:12px;height:12px;background:#fff;border:1px solid #c4c4c4"></div>
<svg style="left:499px;top:729px" width="5" height="8"><path d="M4.5 0.5 V7.5 L0.5 4 Z" fill="#555"/></svg>
<div style="left:508px;top:727px;width:224px;height:12px;background:#fff;border:1px solid #c4c4c4"></div>
<div style="left:766px;top:727px;width:12px;height:12px;background:#fff;border:1px solid #c4c4c4"></div>
<svg style="left:770px;top:729px" width="5" height="8"><path d="M0.5 0.5 V7.5 L4.5 4 Z" fill="#555"/></svg>
<div style="left:231px;top:743px;width:563px;height:1px;background:#d0d0d0"></div>
<svg style="left:20px;top:54px" width="27" height="24">
<rect x="7.5" y="1.5" width="17" height="13" fill="#f6f9fc" stroke="#8d9c9c" stroke-width="1"/>
<path d="M17 6 H23 M17 9 H23 M17 12 H23 M20 3 V14" stroke="#d0dcea" stroke-width="0.8"/>
<path d="M1 5 H18 V22.7 H2.5 L1 21.2 Z" fill="#7d5fb8"/>
<rect x="4" y="5" width="11.2" height="8" fill="#fafafa"/>
<path d="M5 7 H9 M5 9 H9 M5 11 H9" stroke="#c8c8c8" stroke-width="0.8"/>
<rect x="5.5" y="16.4" width="7.5" height="6.3" fill="#f4f4f0"/>
<rect x="7.2" y="17.4" width="2.2" height="5.3" fill="#6a4fa8"/>
<path d="M11 12.5 C11 7.5 14 5 18.5 5" fill="none" stroke="#3a78d4" stroke-width="3"/>
<path d="M17.5 1 L23.5 5 L17.5 9.5 Z" fill="#3a78d4"/>
</svg>
<svg style="left:69px;top:52px" width="27" height="27">
<path d="M1.5 1.5 H12 L18.5 8 V24.5 H1.5 Z" fill="#f4f7fb" stroke="#a6b4c2" stroke-width="1"/>
<path d="M12 1.5 V8 H18.5" fill="#dfe7ef" stroke="#a6b4c2" stroke-width="1"/>
<path d="M17 16 L24 23.5" stroke="#6d747c" stroke-width="2.6" stroke-linecap="round"/>
<circle cx="13.5" cy="12.5" r="6.2" fill="#b8d3ee" stroke="#6f8aa6" stroke-width="1.3"/>
<path d="M10 11 C11 9 13.5 8.5 15.5 9" fill="none" stroke="#fff" stroke-width="1.2"/>
</svg>
<svg style="left:124px;top:52px" width="30" height="28">
<path d="M4 22.5 L17.5 10.5" stroke="#9a6a12" stroke-width="4" stroke-linecap="square"/>
<path d="M4 22.5 L17.5 10.5" stroke="#e0a828" stroke-width="2.4" stroke-linecap="square"/>
<path d="M13.5 5.5 C17 4 22 4.5 24.5 7.5 L26.5 10.5 L24 13 L22 10.5 C20.5 9.5 18 9.5 16 10 Z" fill="#e4ddf6" stroke="#8272c4" stroke-width="1.1"/>
<path d="M11 12 L22 22" stroke="#8494ad" stroke-width="4.2" stroke-linecap="round"/>
<path d="M11 12 L22 22" stroke="#f4f6fa" stroke-width="2.2" stroke-linecap="round"/>
<path d="M12.5 12.5 C13.5 10 13 6.5 10 5 L9.5 8.5 L7 9 L4.5 7 C3 9 4 12 6 13 C8 14 10.5 14 12.5 12.5 Z" fill="#f4f6fa" stroke="#8494ad" stroke-width="1.2"/>
</svg>
<svg style="left:189px;top:52px" width="27" height="26">
<path d="M10.5 5.5 H19 L24.5 11 V24.5 H10.5 Z" fill="#f4f7fb" stroke="#8fa0b2" stroke-width="1"/>
<rect x="1.5" y="1.5" width="10" height="10" fill="#e8f0fa" stroke="#6b8fc0" stroke-width="1"/>
<path d="M4 6.5 L6.5 4 M4 6.5 L6.5 9 M7 4.5 L10 8.5 M10 4.5 L7 8.5" stroke="#2f5faa" stroke-width="1"/>
<path d="M12 7 C16 7 17 10 17 13" fill="none" stroke="#3d86d8" stroke-width="2.4"/>
<path d="M13 12.5 H21 L17 18 Z" fill="#3d86d8"/>
</svg>
<svg style="left:241px;top:53px" width="27" height="27">
<path d="M1.5 1.5 H12 L18.5 8 V24.5 H1.5 Z" fill="#f4f7fb" stroke="#a6b4c2" stroke-width="1"/>
<path d="M12 1.5 V8 H18.5" fill="#dfe7ef" stroke="#a6b4c2" stroke-width="1"/>
<path d="M10 3 L14 7 L10 11 L6 7 Z" fill="#e2452a"/>
<path d="M10 11 V14 M6 14 H14 M6 14 V16 M13 14 V16" stroke="#555" stroke-width="0.8" fill="none"/>
<rect x="3" y="17" width="5.5" height="5" fill="#3aa84a"/>
<rect x="10" y="17" width="5.5" height="5" fill="#3aa84a"/>
<path d="M19.5 19.5 L24.5 25" stroke="#6d747c" stroke-width="2.2" stroke-linecap="round"/>
<circle cx="17" cy="16.5" r="4.3" fill="#a7c9e8" stroke="#5f7f9f" stroke-width="1.2"/>
</svg>
<svg style="left:8px;top:150px" width="50" height="135">
<path d="M7.5 8 V122" stroke="#c4c4c4" stroke-width="1" stroke-dasharray="1,1"/>
<path d="M7.5 8.5 H15 M7.5 22.5 H15 M11 51.5 H15 M7.5 37 H15 M7.5 79.5 H15 M7.5 94 H15 M7.5 108 H15 M11 122.5 H15" stroke="#c4c4c4" stroke-width="1" stroke-dasharray="1,1"/>
<path d="M22 51.5 V62 M26 65.5 H30" stroke="#c4c4c4" stroke-width="1" stroke-dasharray="1,1"/>
</svg>
<svg style="left:11px;top:196px" width="9" height="9"><rect x="0.5" y="0.5" width="8" height="8" fill="#fff" stroke="#9a9a9a" stroke-width="1"/><path d="M2 4.5 H7" stroke="#111" stroke-width="1"/></svg>
<svg style="left:25px;top:211px" width="9" height="9"><rect x="0.5" y="0.5" width="8" height="8" fill="#fff" stroke="#9a9a9a" stroke-width="1"/><path d="M2 4.5 H7 M4.5 2 V7" stroke="#111" stroke-width="1"/></svg>
<svg style="left:11px;top:268px" width="9" height="9"><rect x="0.5" y="0.5" width="8" height="8" fill="#fff" stroke="#9a9a9a" stroke-width="1"/><path d="M2 4.5 H7 M4.5 2 V7" stroke="#111" stroke-width="1"/></svg>
<svg style="left:27px;top:152px" width="12" height="14"><path d="M0.5 0.5 H7 L10.5 4 V12.5 H0.5 Z" fill="#fff" stroke="#7f8fa6" stroke-width="1"/><path d="M7 0.5 V4 H10.5" fill="none" stroke="#7f8fa6" stroke-width="0.8"/><path d="M1.5 5.5 H5.5 M3.5 3.5 V7.5" stroke="#3f60b8" stroke-width="1"/><path d="M5.5 9.5 H8.5 M7 8 V11" stroke="#3f60b8" stroke-width="1"/></svg>
<svg style="left:26px;top:166px" width="12" height="13"><rect x="0.5" y="0.5" width="10" height="11.5" fill="#dfe8f4" stroke="#7f8fa6" stroke-width="1"/><rect x="2" y="2" width="7" height="2" fill="#e8831c"/><rect x="2" y="8.5" width="7" height="2" fill="#e8831c"/></svg>
<svg style="left:25px;top:180px" width="14" height="13"><rect x="0.5" y="0.5" width="12.5" height="11.5" fill="#8cc6f0" stroke="#8a96a8" stroke-width="1"/><circle cx="9.5" cy="4" r="1.8" fill="#f7a45a"/><path d="M1 11.5 L4.5 7 L7.5 10 L9.5 8 L12.5 11.5 Z" fill="#fff"/></svg>
<svg style="left:25px;top:195px" width="14" height="13"><rect x="0.5" y="0.5" width="12.5" height="11.5" fill="#fff" stroke="#8a96a8" stroke-width="1"/><rect x="0.5" y="0.5" width="12.5" height="2" fill="#3f7fd8"/><path d="M0.5 5.5 H13 M0.5 8.5 H13 M4.5 2.5 V12 M8.5 2.5 V12" stroke="#aab4c0" stroke-width="0.9"/></svg>
<svg style="left:40px;top:209px" width="14" height="13"><rect x="0.5" y="0.5" width="12.5" height="11.5" fill="#fff" stroke="#8a96a8" stroke-width="1"/><rect x="0.5" y="0.5" width="12.5" height="2" fill="#3f7fd8"/><path d="M0.5 5.5 H13 M0.5 8.5 H13 M4.5 2.5 V12 M8.5 2.5 V12" stroke="#aab4c0" stroke-width="0.9"/></svg>
<svg style="left:25px;top:223px" width="14" height="13"><rect x="0.5" y="0.5" width="12.5" height="11.5" fill="#fff" stroke="#8a96a8" stroke-width="1"/><rect x="0.5" y="0.5" width="12.5" height="2" fill="#3f7fd8"/><path d="M0.5 5 H13 M0.5 9 H13" stroke="#aab4c0" stroke-width="0.9"/><rect x="4" y="5.5" width="5" height="3" fill="#f0b020"/></svg>
<div class="t" style="left:26px;top:234px;font-size:13px;font-weight:bold;color:#1f3f9a;line-height:20px">&#937;</div>
<div class="t" style="left:26px;top:248px;font-family:'Liberation Serif';font-size:14px;font-style:italic;color:#1f3f9a;line-height:20px">f<span style="font-size:11px">x</span></div>
<svg style="left:27px;top:266px" width="12" height="14"><path d="M0.5 0.5 H7 L10.5 4 V12.5 H0.5 Z" fill="#fff" stroke="#7f8fa6" stroke-width="1"/><path d="M2.5 4.5 L4 6 L7 2.5 M2.5 9 L4 10.5 L7 7" stroke="#e0302a" stroke-width="1.3" fill="none"/></svg>
<svg style="left:162px;top:612px" width="10" height="10"><rect x="0.5" y="0.5" width="9" height="9" fill="#ededed" stroke="#a0a0a0" stroke-width="1"/><path d="M2 5 L4 7.5 L8 2" stroke="#333" stroke-width="1.3" fill="none"/></svg>
<svg style="left:162px;top:644px" width="10" height="10"><rect x="0.5" y="0.5" width="9" height="9" fill="#ededed" stroke="#a0a0a0" stroke-width="1"/><path d="M2 5 L4 7.5 L8 2" stroke="#333" stroke-width="1.3" fill="none"/></svg>
<svg style="left:162px;top:692px" width="10" height="10"><rect x="0.5" y="0.5" width="9" height="9" fill="#ededed" stroke="#a0a0a0" stroke-width="1"/><path d="M2 5 L4 7.5 L8 2" stroke="#333" stroke-width="1.3" fill="none"/></svg>
<div style="left:192px;top:658px;width:16px;height:15px;background:#f6f6f6;border-left:1px solid #ddd"></div>
<svg style="left:194px;top:660px" width="13" height="11"><path d="M2 9 L8.5 2 C9.5 1 11.5 2.5 10.5 3.5 L5 10 H2 Z" fill="#fff" stroke="#555" stroke-width="1"/><path d="M3 10.5 H12" stroke="#555" stroke-width="0.8"/></svg>
<div style="left:208px;top:658px;width:16px;height:15px;background:#f6f6f6;border-left:1px solid #ddd"></div>
<div style="left:212px;top:665px;width:1.5px;height:1.5px;background:#555"></div>
<div style="left:215px;top:665px;width:1.5px;height:1.5px;background:#555"></div>
<div style="left:218px;top:665px;width:1.5px;height:1.5px;background:#555"></div>
<div style="left:208px;top:674px;width:16px;height:15px;background:#f6f6f6;border-left:1px solid #ddd"></div>
<svg style="left:213px;top:680px" width="6" height="4"><path d="M0 0 H5 L2.5 3 Z" fill="#444"/></svg>
</body></html>
